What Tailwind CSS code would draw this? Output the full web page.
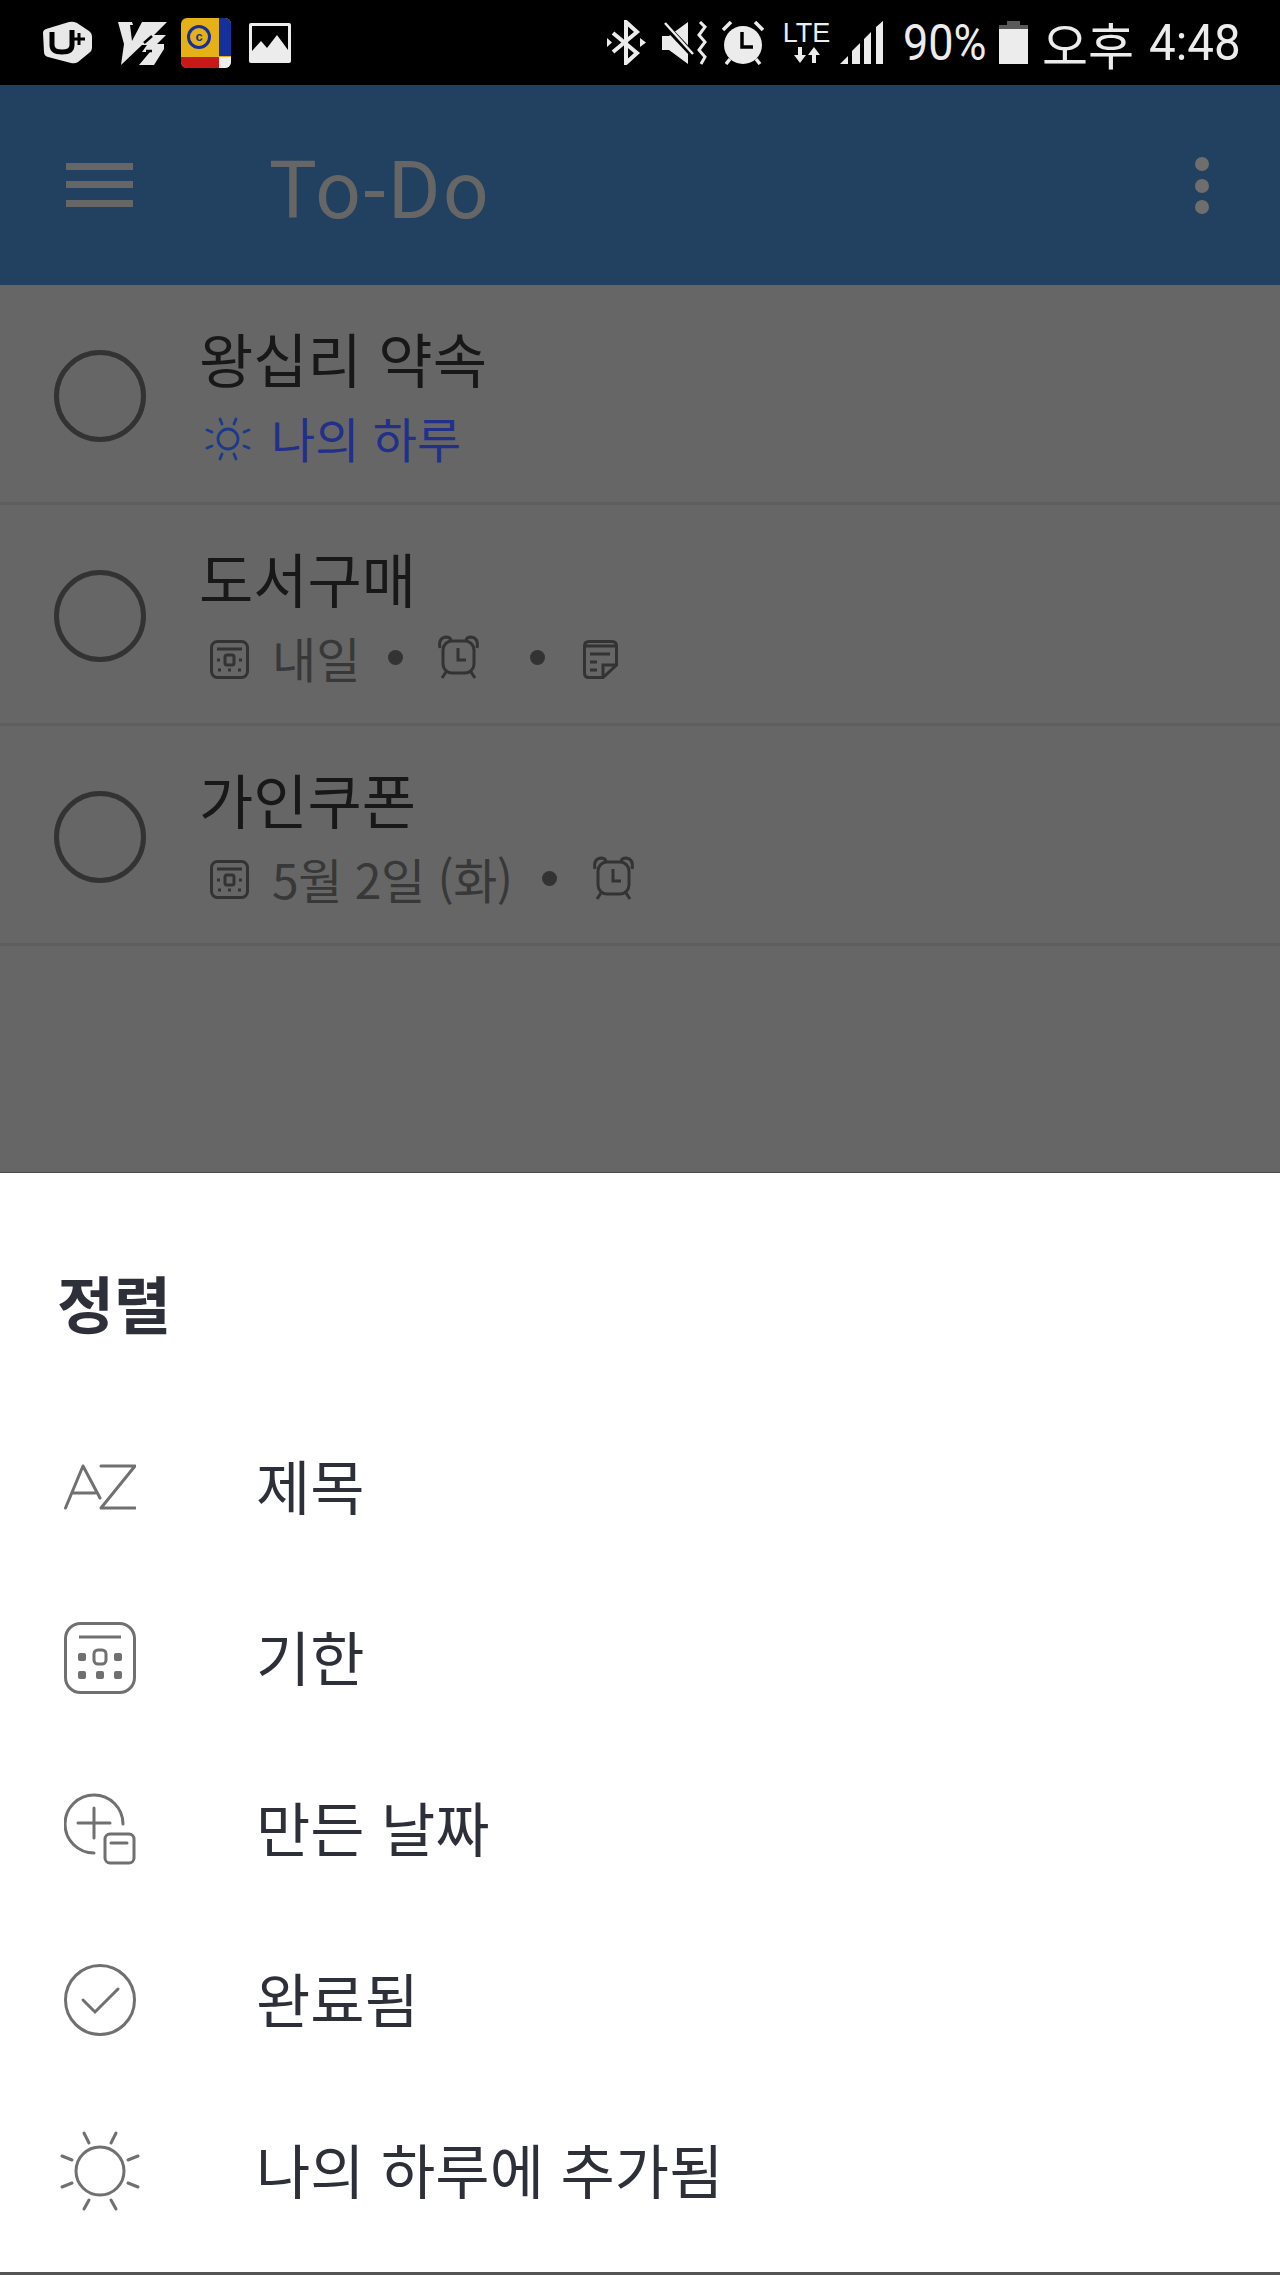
<!DOCTYPE html>
<html lang="ko">
<head>
<meta charset="utf-8">
<script src="https://cdn.jsdelivr.net/npm/@tailwindcss/browser@4"></script>
<title>To-Do</title>
</head>
<body class="m-0 bg-white">
<div class="w-[1280px] h-[2275px] flex flex-col overflow-hidden font-['Noto_Sans_CJK_KR',sans-serif]">

  <!-- status bar -->
  <div class="h-[85px] shrink-0 bg-black flex items-center text-[#ececec]">
    <svg class="ml-[43px] w-[49px] h-[43px] shrink-0" viewBox="0 0 49 43"><path d="M3 8 L26 1 Q30 0 34 2 L46 10 Q49 12 49 16 L49 27 Q49 30 46 32 L35 41 Q32 43 28 42 L5 36 Q1 35 1 31 L0 12 Q0 9 3 8Z" fill="#e8e8e8"/><path d="M9 11 V24 Q9 31 19 31 Q29 31 29 24 V9" fill="none" stroke="#000" stroke-width="5"/><path d="M36 12 V24 M31 18 H42" stroke="#000" stroke-width="3"/></svg>
    <svg class="ml-[26px] w-[49px] h-[44px] shrink-0" viewBox="0 0 49 44"><path d="M0 1 H14 L15 4 H12 L14 20 L24 1 H49 L36 14 H48 L39 23 H46 L46 28 L36 44 H21 L32 31 H24 L29 24 H24 L3 44 L6 23 Z" fill="#e8e8e8"/><path d="M26 22 L34 15 M28 30 H34" stroke="#000" stroke-width="2.5" fill="none"/></svg>
    <div class="ml-[14px] w-[50px] h-[50px] shrink-0 rounded-[6px] overflow-hidden relative bg-[#e6b017]">
      <div class="absolute right-0 top-0 w-[12px] h-[38px] bg-[#14309a]"></div>
      <div class="absolute left-0 bottom-0 w-[38px] h-[11px] bg-[#c81818]"></div>
      <div class="absolute right-0 bottom-0 w-[12px] h-[11px] bg-[#eeeeee]"></div>
      <div class="absolute left-[6px] top-[7px] w-[24px] h-[24px] rounded-full border-[3px] border-[#14309a] flex items-center justify-center text-[13px] leading-none font-bold text-[#14309a] font-['Liberation_Sans',sans-serif]">c</div>
    </div>
    <svg class="ml-[18px] w-[42px] h-[40px] shrink-0" viewBox="0 0 42 40"><rect width="42" height="40" rx="2" fill="#ececec"/><rect x="3" y="3" width="36" height="25" fill="#000"/><path d="M3 28 L12 18 L18 25 L28 12 L39 27 V30 H3Z" fill="#ececec"/></svg>
    <svg class="ml-[316px] w-[39px] h-[45px] shrink-0" viewBox="0 0 39 45"><path d="M6 13 L30 33 L19 43 V2 L30 12 L6 32" fill="none" stroke="#ececec" stroke-width="4"/><path d="M0 18 L5 22.5 L0 27Z M33 18 L39 22.5 L33 27Z" fill="#ececec"/></svg>
    <svg class="ml-[16px] w-[45px] h-[44px] shrink-0" viewBox="0 0 45 44"><path d="M0 15 H7 L26 1 V43 L7 29 H0Z" fill="#ececec"/><path d="M2 3 L32 35" stroke="#000" stroke-width="6"/><path d="M3 2 L31 33" stroke="#ececec" stroke-width="2.5"/><path d="M38 1 L43 6 L37 14 L43 21 L37 29 L43 36 L39 43" fill="none" stroke="#ececec" stroke-width="3"/></svg>
    <svg class="ml-[15px] w-[42px] h-[44px] shrink-0" viewBox="0 0 42 44"><path d="M1 9 L9 1 M41 9 L33 1 M8 38 L4 43 M34 38 L38 43" stroke="#ececec" stroke-width="3.5"/><circle cx="21" cy="24" r="19" fill="#ececec"/><path d="M20 11 V26 H31" fill="none" stroke="#000" stroke-width="3.5"/></svg>
    <div class="ml-[20px] w-[45px] h-[41px] shrink-0 flex flex-col items-center">
      <span class="text-[27px] leading-[22px] h-[22px] font-['Liberation_Sans',sans-serif]">LTE</span>
      <svg class="mt-[3px] w-[28px] h-[16px]" viewBox="0 0 28 16" fill="#ececec"><path d="M5 0 H9 V8 H13 L7 16 L1 8 H5Z M19 16 H23 V8 H27 L21 0 L15 8 H19Z"/></svg>
    </div>
    <svg class="ml-[11px] w-[44px] h-[43px] shrink-0" viewBox="0 0 44 43"><path d="M0 43 L8 35 V43Z M12 43 V30 L20 22 V43Z M24 43 V18 L31 11 V43Z M36 43 V6 L43 0 V43Z" fill="#ececec"/></svg>
    <span class="ml-[19px] w-[84px] shrink-0 text-[50px] leading-none whitespace-nowrap origin-left scale-x-[0.9] font-['Roboto',sans-serif]">90%</span>
    <svg class="ml-[12px] w-[29px] h-[43px] shrink-0" viewBox="0 0 29 43"><path d="M8 0 H21 V4 H29 V8 H0 V4 H8Z" fill="#5a5a5a"/><rect y="8" width="29" height="35" fill="#ececec"/></svg>
    <span class="ml-[14px] text-[50px] leading-none whitespace-nowrap">오후</span>
    <span class="ml-[15px] text-[50px] leading-none whitespace-nowrap origin-left scale-x-[0.95] font-['Roboto',sans-serif]">4:48</span>
  </div>

  <!-- app bar -->
  <div class="h-[200px] shrink-0 bg-[#224060] flex items-center">
    <svg class="ml-[66px] w-[67px] h-[44px] shrink-0" viewBox="0 0 67 44" fill="#666"><rect width="67" height="7"/><rect y="18" width="67" height="7"/><rect y="37" width="67" height="7"/></svg>
    <span class="ml-[136px] mt-[12px] text-[80px] tracking-[2.5px] leading-none text-[#666] font-['Roboto',sans-serif]">To-Do</span>
    <svg class="ml-auto mr-[71px] w-[14px] h-[57px] shrink-0" viewBox="0 0 14 57" fill="#6e6e6e"><circle cx="7" cy="7" r="7"/><circle cx="7" cy="29" r="7"/><circle cx="7" cy="50" r="7"/></svg>
  </div>

  <!-- dimmed list -->
  <div class="h-[887px] shrink-0 bg-[#666]">
    <div class="h-[220px] border-b-[3px] border-[#5e5e5e] flex">
      <div class="ml-[54px] mt-[65px] w-[92px] h-[92px] rounded-full border-[5px] border-[#333] shrink-0"></div>
      <div class="ml-[53px] pt-[33px]">
        <div class="h-[82px] leading-[80px] text-[59px] text-[#181818] whitespace-nowrap">왕십리 약속</div>
        <div class="h-[78px] flex items-center text-[48px] leading-none text-[#22308a] whitespace-nowrap">
          <svg class="ml-[6px] w-[46px] h-[44px] shrink-0" viewBox="-23 -22 46 44" fill="none" stroke="#1d3a8a" stroke-width="2.8" stroke-linecap="round"><circle r="10"/><path d="M-8 -20 L-6 -15 M8 -20 L6 -15 M-21 -9 L-16 -7 M21 -9 L16 -7 M-21 9 L-16 7 M21 9 L16 7 M-8 20 L-6 15 M8 20 L6 15"/></svg>
          <span class="ml-[20px] -mt-[4px]">나의 하루</span>
        </div>
      </div>
    </div>
    <div class="h-[220.5px] border-b-[3px] border-[#5e5e5e] flex">
      <div class="ml-[54px] mt-[65px] w-[92px] h-[92px] rounded-full border-[5px] border-[#333] shrink-0"></div>
      <div class="ml-[53px] pt-[33px]">
        <div class="h-[82px] leading-[80px] text-[59px] text-[#181818] whitespace-nowrap">도서구매</div>
        <div class="h-[78px] flex items-center text-[48px] leading-none text-[#383838] whitespace-nowrap">
          <svg class="ml-[11px] w-[39px] h-[39px] shrink-0" viewBox="0 0 39 39" fill="none" stroke="#333" stroke-width="3"><rect x="1.5" y="1.5" width="36" height="36" rx="6"/><path d="M7 9 H32"/><rect x="15" y="15" width="9" height="10" rx="2"/><path d="M7 20 H10 M29 20 H32 M8 30 H11 M18 30 H21 M28 30 H31"/></svg>
          <span class="ml-[23px] w-[84px] -mt-[4px]">내일</span>
          <span class="ml-[32px] w-[15px] h-[15px] rounded-full bg-[#333] shrink-0 -mt-[3px]"></span>
          <svg class="ml-[34px] w-[43px] h-[44px] shrink-0 -mt-[4px]" viewBox="0 0 43 44" fill="none" stroke="#333" stroke-width="3"><path d="M3 13 Q1 3 9 2 Q13 2 14 5 M40 13 Q42 3 34 2 Q30 2 29 5"/><rect x="6" y="6" width="31" height="32" rx="9"/><path d="M21 13 V25 H29 M9 37 L5 43 M34 37 L38 43"/></svg>
          <span class="ml-[50px] w-[15px] h-[15px] rounded-full bg-[#333] shrink-0 -mt-[3px]"></span>
          <svg class="ml-[38px] w-[35px] h-[39px] shrink-0" viewBox="0 0 35 39" fill="none" stroke="#333" stroke-width="3"><path d="M33.5 25 V6 Q33.5 1.5 29 1.5 H6 Q1.500 1.500 1.500 6 V33 Q1.500 37.500 6 37.500 H20 Z M20 37.500 V25 H33.500"/><path d="M2 6 H33 M7 14 H27 M7 22 H14 M7 30 H14"/></svg>
        </div>
      </div>
    </div>
    <div class="h-[220.5px] border-b-[3px] border-[#5e5e5e] flex">
      <div class="ml-[54px] mt-[65px] w-[92px] h-[92px] rounded-full border-[5px] border-[#333] shrink-0"></div>
      <div class="ml-[53px] pt-[33px]">
        <div class="h-[82px] leading-[80px] text-[59px] text-[#181818] whitespace-nowrap">가인쿠폰</div>
        <div class="h-[78px] flex items-center text-[48px] leading-none text-[#383838] whitespace-nowrap">
          <svg class="ml-[11px] w-[39px] h-[39px] shrink-0" viewBox="0 0 39 39" fill="none" stroke="#333" stroke-width="3"><rect x="1.5" y="1.5" width="36" height="36" rx="6"/><path d="M7 9 H32"/><rect x="15" y="15" width="9" height="10" rx="2"/><path d="M7 20 H10 M29 20 H32 M8 30 H11 M18 30 H21 M28 30 H31"/></svg>
          <span class="ml-[23px] w-[238px] -mt-[4px] tracking-[-0.5px]">5월 2일 (화)</span>
          <span class="ml-[32px] w-[15px] h-[15px] rounded-full bg-[#333] shrink-0 -mt-[3px]"></span>
          <svg class="ml-[35px] w-[43px] h-[44px] shrink-0 -mt-[4px]" viewBox="0 0 43 44" fill="none" stroke="#333" stroke-width="3"><path d="M3 13 Q1 3 9 2 Q13 2 14 5 M40 13 Q42 3 34 2 Q30 2 29 5"/><rect x="6" y="6" width="31" height="32" rx="9"/><path d="M21 13 V25 H29 M9 37 L5 43 M34 37 L38 43"/></svg>
        </div>
      </div>
    </div>
  </div>

  <!-- sort sheet -->
  <div class="h-[1103px] shrink-0 bg-white border-t border-[#4a4a4a] border-b-[3px] border-b-[#555] text-[#2d3038] text-[59px]">
    <div class="h-[228px] pl-[57px] pt-[79px] text-[62px] font-bold leading-[100px]">정렬</div>
    <div class="h-[171px] flex items-center">
      <svg class="ml-[64px] w-[72px] h-[46px] shrink-0" viewBox="0 0 72 46" fill="none" stroke="#707070" stroke-width="3" stroke-linecap="round" stroke-linejoin="round"><path d="M1.500 44 L19 2 L36 34 M8 29 H31"/><path d="M37 2 H71 L37 44 H71"/></svg>
      <span class="ml-[120px] -mt-[5px] leading-none">제목</span>
    </div>
    <div class="h-[171px] flex items-center">
      <svg class="ml-[64px] w-[72px] h-[72px] shrink-0" viewBox="0 0 72 72" fill="none" stroke="#707070" stroke-width="3"><rect x="1.500" y="1.500" width="69" height="69" rx="15"/><path d="M15 15 H57"/><rect x="30" y="28" width="12" height="14" rx="4"/><g fill="#707070" stroke="none"><rect x="14" y="31" width="8" height="8" rx="2"/><rect x="50" y="31" width="8" height="8" rx="2"/><rect x="14" y="49" width="8" height="8" rx="2"/><rect x="32" y="49" width="8" height="8" rx="2"/><rect x="50" y="49" width="8" height="8" rx="2"/></g></svg>
      <span class="ml-[120px] -mt-[5px] leading-none">기한</span>
    </div>
    <div class="h-[171px] flex items-center">
      <svg class="ml-[64px] w-[72px] h-[72px] shrink-0" viewBox="0 0 72 72" fill="none" stroke="#707070" stroke-width="3" stroke-linecap="round"><path d="M59 31 A29 29 0 1 0 30 60"/><path d="M14 30 H46 M30 15 V45"/><rect x="41" y="41" width="29" height="29" rx="5"/><path d="M47 50 H63"/></svg>
      <span class="ml-[120px] -mt-[5px] leading-none">만든 날짜</span>
    </div>
    <div class="h-[171px] flex items-center">
      <svg class="ml-[64px] w-[72px] h-[72px] shrink-0" viewBox="0 0 72 72" fill="none" stroke="#707070" stroke-width="3" stroke-linecap="round"><circle cx="36" cy="36" r="34.500"/><path d="M19 36 L31 48 L54 25"/></svg>
      <span class="ml-[120px] -mt-[5px] leading-none">완료됨</span>
    </div>
    <div class="h-[171px] flex items-center">
      <svg class="ml-[59px] w-[82px] h-[82px] shrink-0" viewBox="-41 -41 82 82" fill="none" stroke="#707070" stroke-width="3" stroke-linecap="round"><circle r="24"/><path d="M-16 -38 L-11 -28 M16 -38 L11 -28 M-38 -15 L-28 -11 M38 -15 L28 -11 M-38 16 L-28 12 M38 16 L28 12 M-16 38 L-11 29 M16 38 L11 29"/></svg>
      <span class="ml-[115px] -mt-[5px] leading-none">나의 하루에 추가됨</span>
    </div>
  </div>
</div>
</body>
</html>
